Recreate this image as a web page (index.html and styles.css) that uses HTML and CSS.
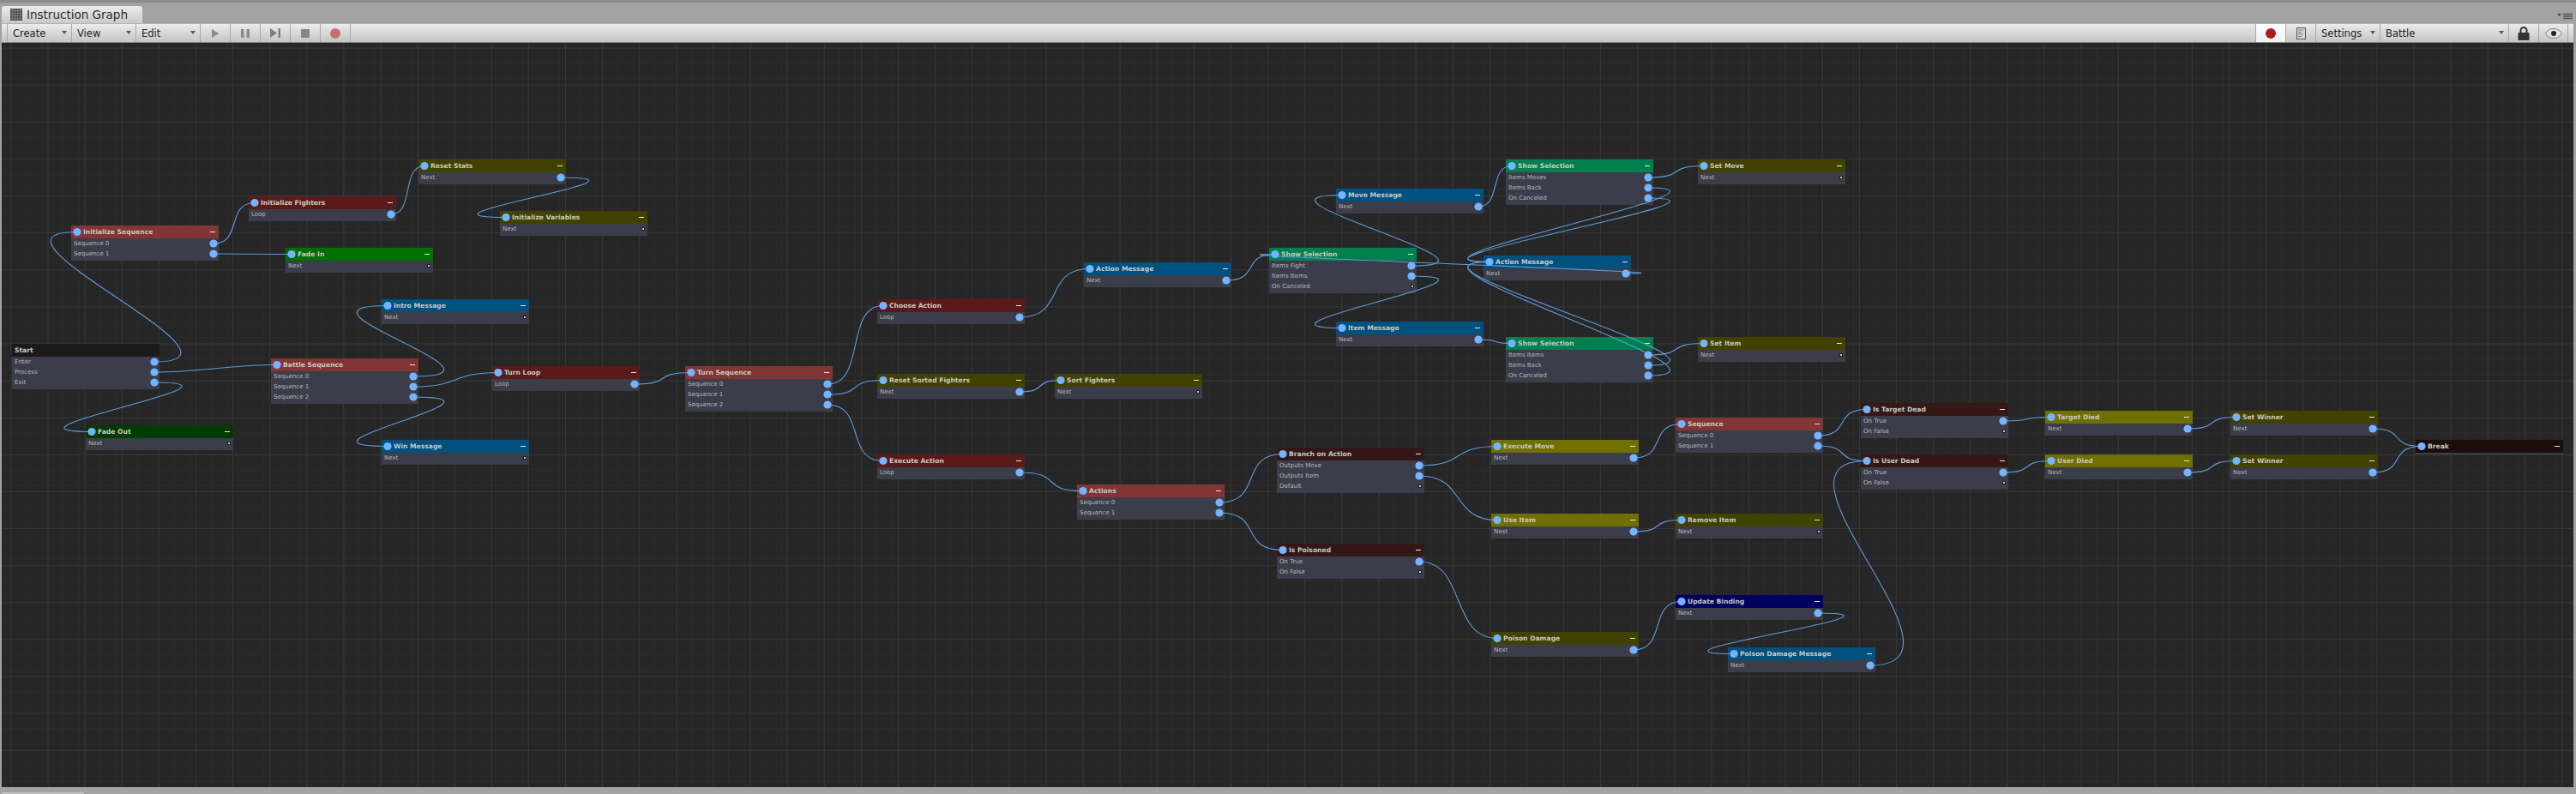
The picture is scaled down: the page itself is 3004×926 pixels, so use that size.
FILE: index.html
```html
<!DOCTYPE html>
<html lang="en">
<head>
  <meta charset="UTF-8">
  <title>Instruction Graph</title>
  <link rel="stylesheet" href="styles.css">
</head>
<body>
  <div class="tabbar">
    <div class="tab">
      <svg class="tab-icon" width="14" height="14" viewBox="0 0 14 14">
        <rect width="14" height="14" fill="#4a4a4a"/>
        <path d="M2.5 0V14M5.5 0V14M8.5 0V14M11.5 0V14M0 2.5H14M0 5.5H14M0 8.5H14M0 11.5H14" stroke="#7a7a7a" stroke-width="1"/>
      </svg>
      <span>Instruction Graph</span>
    </div>
    <div class="tab-menu">
      <svg width="18" height="8" viewBox="0 0 18 8">
        <path d="M0 1H5L2.5 4Z" fill="#444"/>
        <path d="M7 1.5H18M7 4H18M7 6.5H18" stroke="#555" stroke-width="1.4"/>
      </svg>
    </div>
  </div>

  <div class="toolbar">
    <div class="tool drop w-75"><span>Create</span><i class="caret"></i></div>
    <div class="tool drop w-75"><span>View</span><i class="caret"></i></div>
    <div class="tool drop w-75"><span>Edit</span><i class="caret"></i></div>
    <div class="tool icon">
      <svg width="10" height="12" viewBox="0 0 10 12"><path d="M1 1L9 6L1 11Z" fill="#8a8a8a"/></svg>
    </div>
    <div class="tool icon">
      <svg width="10" height="10" viewBox="0 0 10 10"><path d="M0 0H3.5V10H0ZM6.5 0H10V10H6.5Z" fill="#8a8a8a"/></svg>
    </div>
    <div class="tool icon">
      <svg width="12" height="11" viewBox="0 0 12 11"><path d="M0 0L8 5.5L0 11ZM9.5 0H12V11H9.5Z" fill="#7e7e7e"/></svg>
    </div>
    <div class="tool icon">
      <svg width="10" height="10" viewBox="0 0 10 10"><rect width="10" height="10" fill="#858585"/></svg>
    </div>
    <div class="tool icon">
      <svg width="12" height="12" viewBox="0 0 12 12"><circle cx="6" cy="6" r="6" fill="#c66f6f"/></svg>
    </div>
    <div class="tool-gap"></div>
    <div class="tool icon active">
      <svg width="12" height="12" viewBox="0 0 12 12"><circle cx="6" cy="6" r="6" fill="#ab1e14"/></svg>
    </div>
    <div class="tool icon">
      <svg width="11" height="14" viewBox="0 0 11 14">
        <rect x="0.5" y="0.5" width="10" height="13" fill="#d8d8d8" stroke="#555"/>
        <path d="M2 3H8M2 5.5H6M2 8H8M2 10.5H6" stroke="#777" stroke-width="1"/>
      </svg>
    </div>
    <div class="tool drop w-75"><span>Settings</span><i class="caret"></i></div>
    <div class="tool drop w-150"><span>Battle</span><i class="caret"></i></div>
    <div class="tool icon">
      <svg width="14" height="16" viewBox="0 0 14 16">
        <path d="M3.5 7V4.5a3.5 3.5 0 0 1 7 0V7" fill="none" stroke="#333" stroke-width="2"/>
        <rect x="0.5" y="7" width="13" height="9" rx="1" fill="#333"/>
      </svg>
    </div>
    <div class="tool icon">
      <svg width="20" height="12" viewBox="0 0 20 12">
        <path d="M0.5 6C4 1 7 0.5 10 0.5S16 1 19.5 6C16 11 13 11.5 10 11.5S4 11 0.5 6Z" fill="#e4e4e4" stroke="#777"/>
        <circle cx="10" cy="6" r="3" fill="#222"/>
      </svg>
    </div>
  </div>

  <div class="canvas" id="canvas"></div>

  <div class="statusbar"><div class="status-tab"></div></div>

  <script src="graph.js"></script>
</body>
</html>
```

FILE: styles.css
```css
html, body {
  margin: 0;
  height: 100%;
}
body {
  display: flex;
  flex-direction: column;
  overflow: hidden;
  background: #a2a2a2;
  font-family: "DejaVu Sans", sans-serif;
  color: #222;
}

/* window tab strip */
.tabbar {
  flex: none;
  height: 24px;
  display: flex;
  align-items: flex-end;
  justify-content: space-between;
  padding: 0 4px 0 2px;
  background: #a2a2a2;
  border-top: 3px solid #8c8c8c;
}
.tab {
  display: flex;
  align-items: center;
  gap: 5px;
  height: 20px;
  width: 164px;
  padding-left: 10px;
  box-sizing: border-box;
  border-radius: 3px 3px 0 0;
  background: linear-gradient(#ececec, #c9c9c9);
  font-size: 13.5px;
  color: #2c2c2c;
}
.tab-menu {
  display: flex;
  padding-bottom: 4px;
}

/* toolbar */
.toolbar {
  flex: none;
  height: 21px;
  display: flex;
  margin: 0 3px 0 2px;
  padding-left: 6px;
  background: linear-gradient(#ececec, #c4c4c4);
  border-top: 1px solid #b4b4b4;
  border-bottom: 1px solid #8a8a8a;
}
.tool {
  display: flex;
  align-items: center;
  justify-content: center;
  box-sizing: border-box;
  height: 100%;
  width: 35px;
  border-left: 1px solid #a8a8a8;
  position: relative;
}
.tool:last-child {
  border-right: 1px solid #a8a8a8;
  margin-right: 6px;
}
.drop {
  justify-content: flex-start;
  padding-left: 6px;
  font-size: 11.5px;
}
.w-75 { width: 75px; }
.w-150 { width: 150px; }
.caret {
  position: absolute;
  right: 5px;
  top: 8px;
  border-left: 3px solid transparent;
  border-right: 3px solid transparent;
  border-top: 4px solid #555;
}
.tool-gap { flex: 1; border-left: 1px solid #a8a8a8; }
.active { background: linear-gradient(#ffffff, #f0f0f0); }

/* graph area */
.canvas {
  flex: 1;
  position: relative;
  margin: 0 3px 0 2px;
  overflow: hidden;
  background-color: #262626;
  background-image:
    linear-gradient(to right, #373737 1.2px, transparent 1.2px),
    linear-gradient(to bottom, #373737 1.2px, transparent 1.2px),
    linear-gradient(to right, transparent 18px, #2b2b2b 18px, #2b2b2b 19px, transparent 19px, transparent 36px, #2b2b2b 36px, #2b2b2b 37px, transparent 37px),
    linear-gradient(to bottom, transparent 18px, #2b2b2b 18px, #2b2b2b 19px, transparent 19px, transparent 36px, #2b2b2b 36px, #2b2b2b 37px, transparent 37px);
  background-size: 43.12px 43.12px;
  background-position: 10.4px 5.6px;
}
.statusbar {
  flex: 0 0 8px;
  position: relative;
}
.status-tab {
  position: absolute;
  left: 2px;
  bottom: 0;
  width: 96px;
  height: 2px;
  background: #c0c0c0;
  border-radius: 2px 2px 0 0;
}

/* graph nodes */
.node {
  position: absolute;
  width: 172px;
  background: #3c3d4a;
  padding-bottom: 1.5px;
}
.node-head {
  display: flex;
  align-items: center;
  justify-content: space-between;
  height: 15px;
  padding: 0 4px 0 14px;
  font-size: 7.6px;
  font-weight: bold;
  color: #c8c8c0;
  white-space: nowrap;
}
.no-port .node-head { padding-left: 3px; }
.minus {
  width: 6px;
  height: 1.4px;
  background: #e6e6e6;
}
.node-row {
  position: relative;
  height: 12px;
  line-height: 12px;
  padding-left: 3px;
  font-size: 7px;
  color: #b8b8b8;
  white-space: nowrap;
}
.dot {
  position: absolute;
  right: 3px;
  top: 3.5px;
  width: 2.5px;
  height: 2.5px;
  background: #c8c8c8;
  border: 1px solid #1f1f1f;
}

.seq { background: #823535; }
.loop { background: #5a1a1a; }
.act { background: #424200; }
.olive { background: #707000; }
.fade-in { background: #007000; }
.fade-out { background: #003c00; }
.msg { background: #005080; }
.menu { background: #00804f; }
.cond { background: #341818; }
.bind { background: #000060; }
.brk { background: #1c0c0c; }
.start { background: #1a1a1a; }

.wires {
  position: absolute;
  left: 0;
  top: 0;
  width: 100%;
  height: 100%;
  pointer-events: none;
}
.wire {
  fill: none;
  stroke: #5f9bd8;
  stroke-width: 1.1;
}
.port {
  fill: #74b4ff;
}
```

FILE: graph.js
```js
// Positions are read from window coordinates, the canvas starts at 2,50
var OX = 2, OY = 50;
var BACK_TANGENT = 135;

var nodes = {
  start: { t: "Start", x: 14, y: 401, c: "start", rows: ["Enter", "Process", "Exit"], noPort: true, noMin: true },
  initSeq: { t: "Initialize Sequence", x: 83, y: 263, c: "seq", rows: ["Sequence 0", "Sequence 1"] },
  initFighters: { t: "Initialize Fighters", x: 290, y: 229, c: "loop", rows: ["Loop"] },
  resetStats: { t: "Reset Stats", x: 488, y: 186, c: "act", rows: ["Next"] },
  initVars: { t: "Initialize Variables", x: 583, y: 246, c: "act", rows: ["Next"] },
  fadeIn: { t: "Fade In", x: 333, y: 289, c: "fade-in", rows: ["Next"] },
  fadeOut: { t: "Fade Out", x: 100, y: 496, c: "fade-out", rows: ["Next"] },
  battle: { t: "Battle Sequence", x: 316, y: 418, c: "seq", rows: ["Sequence 0", "Sequence 1", "Sequence 2"] },
  intro: { t: "Intro Message", x: 445, y: 349, c: "msg", rows: ["Next"] },
  win: { t: "Win Message", x: 445, y: 513, c: "msg", rows: ["Next"] },
  turnLoop: { t: "Turn Loop", x: 574, y: 427, c: "loop", rows: ["Loop"] },
  turnSeq: { t: "Turn Sequence", x: 799, y: 427, c: "seq", rows: ["Sequence 0", "Sequence 1", "Sequence 2"] },
  chooseAction: { t: "Choose Action", x: 1023, y: 349, c: "loop", rows: ["Loop"] },
  resetSorted: { t: "Reset Sorted Fighters", x: 1023, y: 436, c: "act", rows: ["Next"] },
  sortFighters: { t: "Sort Fighters", x: 1230, y: 436, c: "act", rows: ["Next"] },
  executeAction: { t: "Execute Action", x: 1023, y: 530, c: "loop", rows: ["Loop"] },
  actionMsg: { t: "Action Message", x: 1264, y: 306, c: "msg", rows: ["Next"] },
  actions: { t: "Actions", x: 1256, y: 565, c: "seq", rows: ["Sequence 0", "Sequence 1"] },
  showFight: { t: "Show Selection", x: 1480, y: 289, c: "menu", rows: ["Items Fight", "Items Items", "On Canceled"] },
  moveMsg: { t: "Move Message", x: 1558, y: 220, c: "msg", rows: ["Next"] },
  itemMsg: { t: "Item Message", x: 1558, y: 375, c: "msg", rows: ["Next"] },
  showMoves: { t: "Show Selection", x: 1756, y: 186, c: "menu", rows: ["Items Moves", "Items Back", "On Canceled"] },
  showItems: { t: "Show Selection", x: 1756, y: 393, c: "menu", rows: ["Items Items", "Items Back", "On Canceled"] },
  actionMsg2: { t: "Action Message", x: 1730, y: 298, c: "msg", rows: ["Next"] },
  setMove: { t: "Set Move", x: 1980, y: 186, c: "act", rows: ["Next"] },
  setItem: { t: "Set Item", x: 1980, y: 393, c: "act", rows: ["Next"] },
  branch: { t: "Branch on Action", x: 1489, y: 522, c: "cond", rows: ["Outputs Move", "Outputs Item", "Default"] },
  poisoned: { t: "Is Poisoned", x: 1489, y: 634, c: "cond", rows: ["On True", "On False"] },
  executeMove: { t: "Execute Move", x: 1739, y: 513, c: "olive", rows: ["Next"] },
  useItem: { t: "Use Item", x: 1739, y: 599, c: "olive", rows: ["Next"] },
  poisonDamage: { t: "Poison Damage", x: 1739, y: 737, c: "act", rows: ["Next"] },
  sequence: { t: "Sequence", x: 1954, y: 487, c: "seq", rows: ["Sequence 0", "Sequence 1"] },
  removeItem: { t: "Remove Item", x: 1954, y: 599, c: "act", rows: ["Next"] },
  updateBinding: { t: "Update Binding", x: 1954, y: 694, c: "bind", rows: ["Next"] },
  poisonMsg: { t: "Poison Damage Message", x: 2015, y: 755, c: "msg", rows: ["Next"] },
  targetDead: { t: "Is Target Dead", x: 2170, y: 470, c: "cond", rows: ["On True", "On False"] },
  userDead: { t: "Is User Dead", x: 2170, y: 530, c: "cond", rows: ["On True", "On False"] },
  targetDied: { t: "Target Died", x: 2385, y: 479, c: "olive", rows: ["Next"] },
  userDied: { t: "User Died", x: 2385, y: 530, c: "olive", rows: ["Next"] },
  winner1: { t: "Set Winner", x: 2601, y: 479, c: "act", rows: ["Next"] },
  winner2: { t: "Set Winner", x: 2601, y: 530, c: "act", rows: ["Next"] },
  brk: { t: "Break", x: 2817, y: 513, c: "brk", rows: [] }
};

// from, row, to
var edges = [
  ["start", 0, "initSeq"], ["start", 1, "battle"], ["start", 2, "fadeOut"],
  ["initSeq", 0, "initFighters"], ["initSeq", 1, "fadeIn"],
  ["initFighters", 0, "resetStats"], ["resetStats", 0, "initVars"],
  ["battle", 0, "intro"], ["battle", 1, "turnLoop"], ["battle", 2, "win"],
  ["turnLoop", 0, "turnSeq"],
  ["turnSeq", 0, "chooseAction"], ["turnSeq", 1, "resetSorted"], ["turnSeq", 2, "executeAction"],
  ["chooseAction", 0, "actionMsg"], ["actionMsg", 0, "showFight"],
  ["resetSorted", 0, "sortFighters"], ["executeAction", 0, "actions"],
  ["actions", 0, "branch"], ["actions", 1, "poisoned"],
  ["showFight", 0, "moveMsg"], ["showFight", 1, "itemMsg"],
  ["moveMsg", 0, "showMoves"], ["itemMsg", 0, "showItems"],
  ["showMoves", 0, "setMove"], ["showMoves", 1, "actionMsg2"], ["showMoves", 2, "actionMsg2"],
  ["showItems", 0, "setItem"], ["showItems", 1, "actionMsg2"], ["showItems", 2, "actionMsg2"],
  ["actionMsg2", 0, "showFight"],
  ["branch", 0, "executeMove"], ["branch", 1, "useItem"], ["poisoned", 0, "poisonDamage"],
  ["executeMove", 0, "sequence"], ["useItem", 0, "removeItem"],
  ["poisonDamage", 0, "updateBinding"], ["updateBinding", 0, "poisonMsg"],
  ["poisonMsg", 0, "userDead"],
  ["sequence", 0, "targetDead"], ["sequence", 1, "userDead"],
  ["targetDead", 0, "targetDied"], ["userDead", 0, "userDied"],
  ["targetDied", 0, "winner1"], ["userDied", 0, "winner2"],
  ["winner1", 0, "brk"], ["winner2", 0, "brk"]
];

var canvas = document.getElementById("canvas");
var SVG = "http://www.w3.org/2000/svg";

function connected(id, row) {
  return edges.some(function (e) { return e[0] === id && e[1] === row; });
}

// build the node boxes
Object.keys(nodes).forEach(function (id) {
  var n = nodes[id];
  var el = document.createElement("div");
  el.className = "node" + (n.noPort ? " no-port" : "");
  el.style.left = (n.x - OX) + "px";
  el.style.top = (n.y - OY) + "px";

  var head = document.createElement("div");
  head.className = "node-head " + n.c;
  var title = document.createElement("span");
  title.textContent = n.t;
  head.appendChild(title);
  if (!n.noMin) {
    var minus = document.createElement("i");
    minus.className = "minus";
    head.appendChild(minus);
  }
  el.appendChild(head);

  n.rows.forEach(function (label, i) {
    var row = document.createElement("div");
    row.className = "node-row";
    row.textContent = label;
    if (!connected(id, i)) {
      var dot = document.createElement("i");
      dot.className = "dot";
      row.appendChild(dot);
    }
    el.appendChild(row);
  });
  canvas.appendChild(el);
});

// wires go over the boxes, ports over the wires
var svg = document.createElementNS(SVG, "svg");
svg.setAttribute("class", "wires");

function outPoint(n, row) {
  return { x: n.x + 172 - 6 - OX, y: n.y + 21 + row * 12 - OY };
}
function inPoint(n) {
  return { x: n.x + 7 - OX, y: n.y + 7.5 - OY };
}

edges.forEach(function (e) {
  var a = outPoint(nodes[e[0]], e[1]);
  var b = inPoint(nodes[e[2]]);
  var dx = b.x - a.x;
  var t = dx > 0 ? Math.min(dx * 0.7, 55) : BACK_TANGENT;
  var path = document.createElementNS(SVG, "path");
  path.setAttribute("class", "wire");
  path.setAttribute("d", "M" + a.x + " " + a.y + "C" + (a.x + t) + " " + a.y + " " + (b.x - t) + " " + b.y + " " + b.x + " " + b.y);
  svg.appendChild(path);
});

function addPort(p) {
  var c = document.createElementNS(SVG, "circle");
  c.setAttribute("class", "port");
  c.setAttribute("cx", p.x);
  c.setAttribute("cy", p.y);
  c.setAttribute("r", 4.6);
  svg.appendChild(c);
}

Object.keys(nodes).forEach(function (id) {
  var n = nodes[id];
  if (!n.noPort) addPort(inPoint(n));
  n.rows.forEach(function (label, i) {
    if (connected(id, i)) addPort(outPoint(n, i));
  });
});

canvas.appendChild(svg);
```
